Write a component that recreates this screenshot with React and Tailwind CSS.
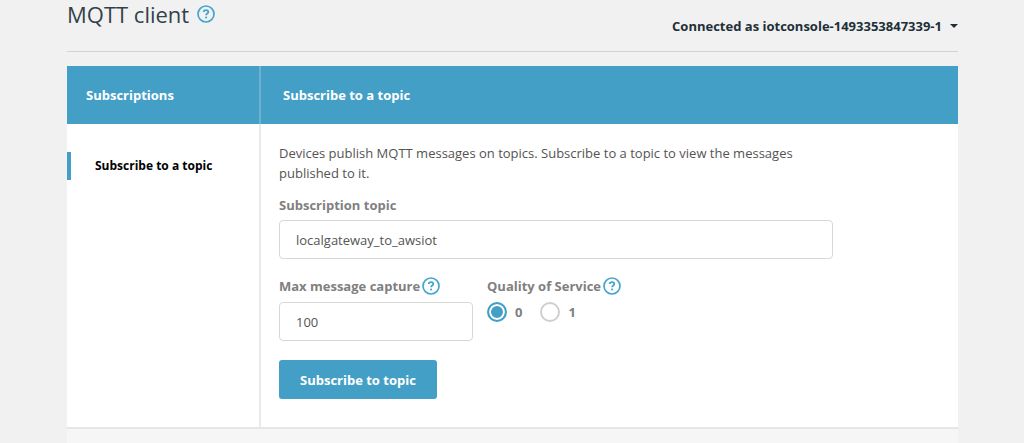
import { useState } from 'react'

const HelpIcon = ({ label }) => (
  <button type="button" aria-label={label} className="shrink-0 text-[#45a6cd]">
    <svg viewBox="0 0 18 18" className="h-[18px] w-[18px]" fill="none" stroke="currentColor">
      <circle cx="9" cy="9" r="8" strokeWidth="1.7" />
      <path d="M6.7 7.1c0-1.3 1-2 2.3-2s2.3.7 2.3 1.9c0 1.5-2.2 1.6-2.2 3.2" strokeWidth="1.8" />
      <circle cx="9.1" cy="12.5" r="1.1" fill="currentColor" stroke="none" />
    </svg>
  </button>
)

const Header = () => (
  <header className="flex h-[52px] items-center justify-between border-b border-[#d2d2d2]">
    <div className="flex items-center gap-2 pb-6">
      <h1 className="text-[22px] leading-[30px] text-[#33424a]">MQTT client</h1>
      <HelpIcon label="About the MQTT client" />
    </div>
    <button type="button" className="flex items-center gap-2 text-[13px] leading-5 font-bold text-[#1d2f38]">
      Connected as iotconsole-1493353847339-1
      <svg viewBox="0 0 8 4" className="h-1 w-2" fill="currentColor">
        <path d="M0 0h8L4 4z" />
      </svg>
    </button>
  </header>
)

const App = () => {
  const [topic, setTopic] = useState('localgateway_to_awsiot')
  const [capture, setCapture] = useState('100')
  const [qos, setQos] = useState('0')

  return (
    <div className="flex min-h-screen flex-col bg-[#f1f1f1] pr-[66px] pl-[67px] font-['Open_Sans',sans-serif] text-[13px] leading-5 text-[#545454]">
      <Header />
      <div className="mt-[14px] grid grid-cols-[192px_1fr] bg-white">
        <h2 className="flex h-[58px] items-center bg-[#449fc6] pl-[19px] font-bold text-white">Subscriptions</h2>
        <h2 className="flex h-[58px] items-center border-l-2 border-[#6eb2d0] bg-[#449fc6] pl-[22px] font-bold text-white">Subscribe to a topic</h2>

        <nav className="pt-7">
          <a href="#subscribe" className="flex h-7 items-center border-l-4 border-[#449fc6] pl-6 text-[12px] font-bold text-black">
            Subscribe to a topic
          </a>
        </nav>

        <form className="border-l-2 border-[#eaeaea] pt-[19px] pb-7 pl-[18px]" onSubmit={(e) => e.preventDefault()}>
          <p className="max-w-[554px] pr-10">
            Devices publish MQTT messages on topics. Subscribe to a topic to view the messages published to it.
          </p>
          <label htmlFor="topic" className="mt-3 block font-bold text-[#808080]">Subscription topic</label>
          <input
            id="topic"
            value={topic}
            onChange={(e) => setTopic(e.target.value)}
            className="mt-[5px] block h-[39px] w-full max-w-[554px] rounded border border-[#d8d8d8] px-4"
          />
          <div className="mt-[17px] flex items-start gap-[14px]">
            <div className="w-[194px]">
              <div className="flex items-center gap-0.5">
                <label htmlFor="capture" className="font-bold text-[#808080]">Max message capture</label>
                <HelpIcon label="About max message capture" />
              </div>
              <input
                id="capture"
                value={capture}
                onChange={(e) => setCapture(e.target.value)}
                className="mt-1.5 block h-[39px] w-full rounded border border-[#d8d8d8] px-4"
              />
            </div>
            <fieldset className="font-bold text-[#808080]">
              <div className="flex items-center gap-0.5">
                <legend>Quality of Service</legend>
                <HelpIcon label="About quality of service" />
              </div>
              <div className="mt-1.5 flex gap-[18px]">
                {['0', '1'].map((value) => (
                  <label key={value} className="flex items-center gap-2">
                    <input
                      type="radio"
                      name="qos"
                      value={value}
                      checked={qos === value}
                      onChange={() => setQos(value)}
                      className="h-5 w-5 appearance-none rounded-full border-2 border-[#cfcfcf] bg-white checked:border-[#449fc6] checked:bg-[#449fc6] checked:shadow-[inset_0_0_0_2px_white]"
                    />
                    {value}
                  </label>
                ))}
              </div>
            </fieldset>
          </div>
          <button type="submit" className="mt-[19px] h-[39px] rounded-[3px] bg-[#449fc6] px-[21px] font-bold text-white">
            Subscribe to topic
          </button>
        </form>
      </div>
      <div className="min-h-4 flex-1 border-t-2 border-[#e6e6e6] bg-[#f6f6f6]" />
    </div>
  )
}

export default App
